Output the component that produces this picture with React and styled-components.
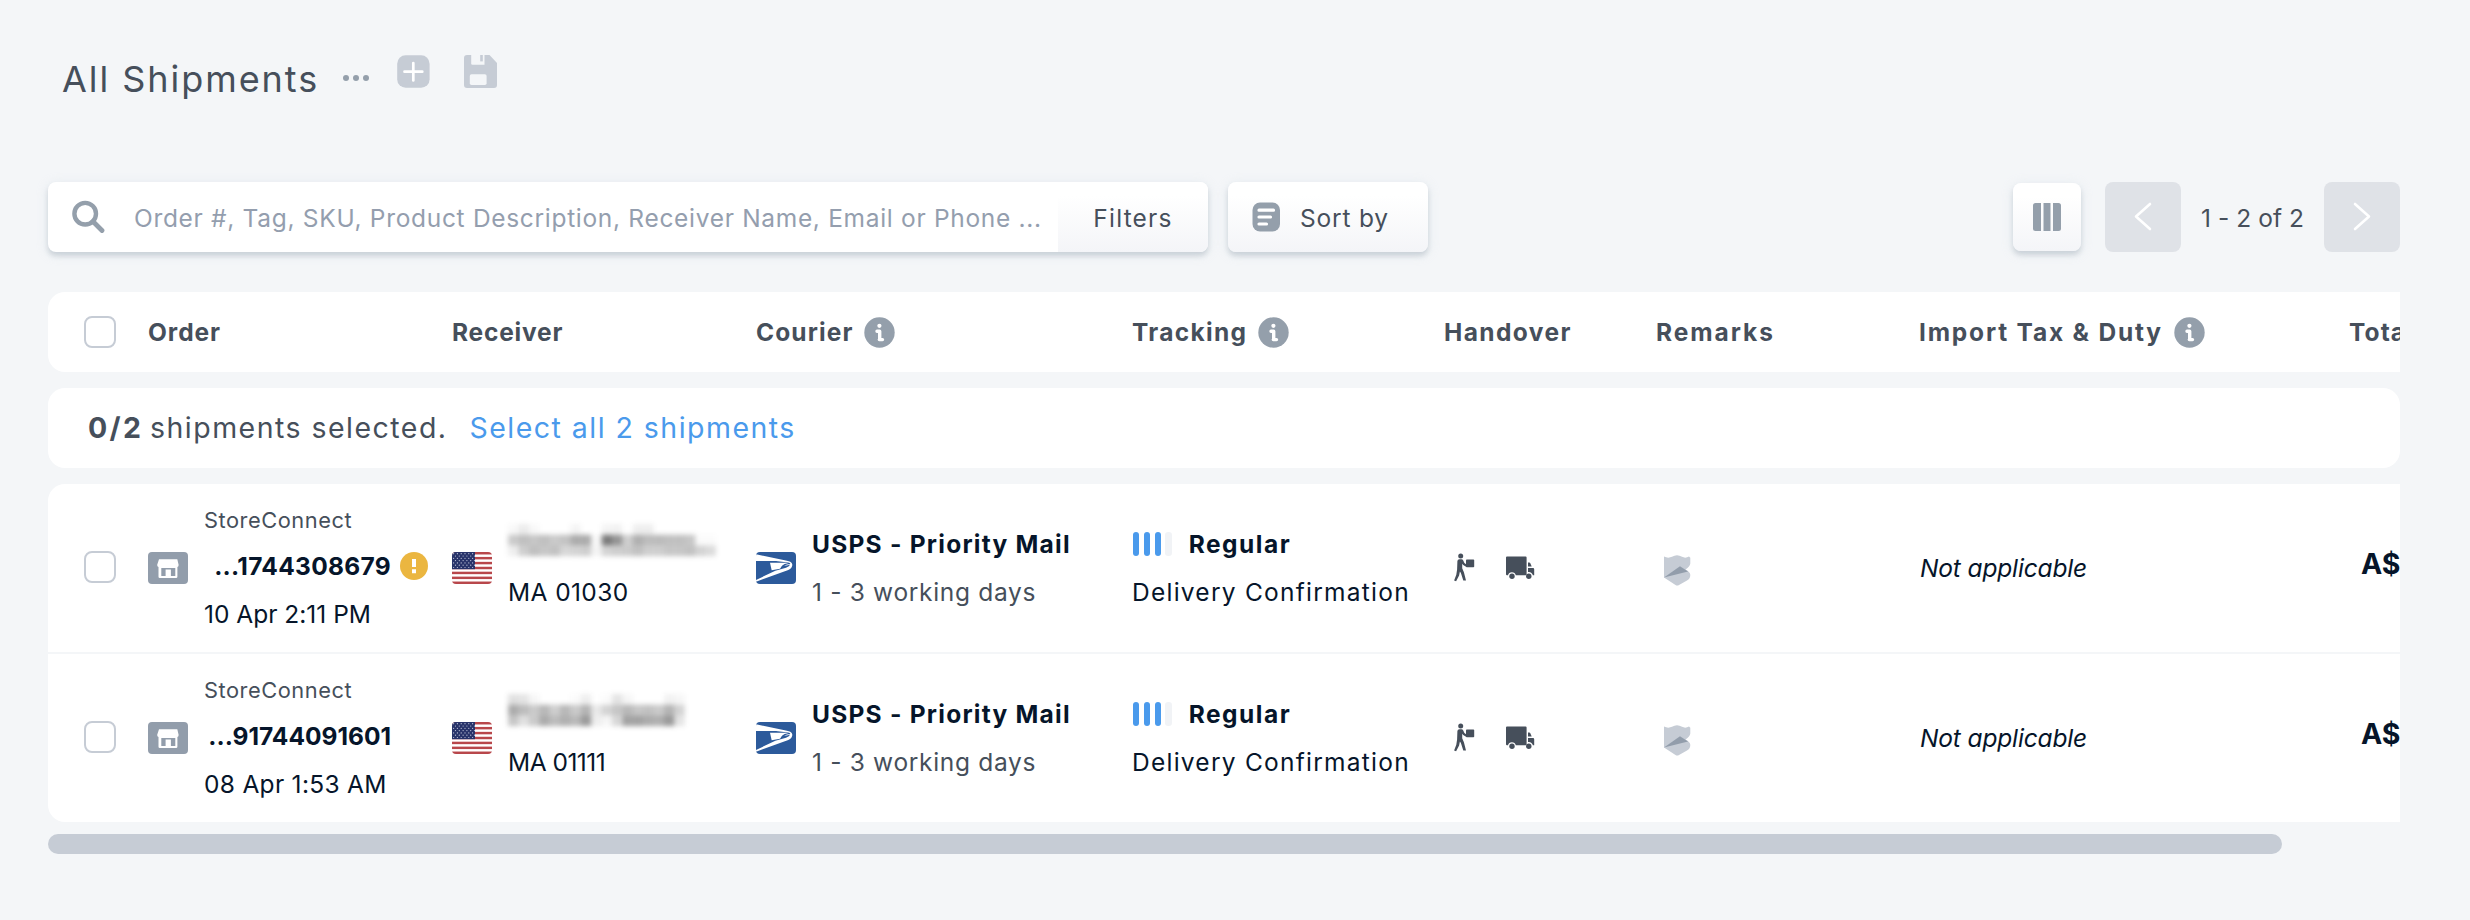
import React from "react";
import styled, { createGlobalStyle, css } from "styled-components";

const c = {
  bg: "#f4f6f8",
  ink: "#06152a",
  slate: "#464f5b",
  grey: "#949fab",
  light: "#c6ccd5",
  pale: "#dfe2e7",
  blue: "#4a9aec",
  amber: "#ebb640",
};

const GlobalStyle = createGlobalStyle`
  *, *::before, *::after { box-sizing: border-box; }
  body {
    margin: 0;
    background: ${c.bg};
    color: ${c.slate};
    font-family: Inter, "Liberation Sans", sans-serif;
    font-size: 24.5px;
    line-height: 48px;
    font-variant-ligatures: none;
  }
  button { font: inherit; color: inherit; border: 0; padding: 0; background: none; }
`;

const Page = styled.main`
  width: 2470px;
  height: 920px;
  padding: 0 70px 0 48px;
  overflow: hidden;
`;

const TitleBar = styled.header`
  display: flex;
  align-items: center;
  height: 156px;
  padding-left: 14px;
`;

const Title = styled.h1`
  margin: 0;
  width: 281px;
  padding-top: 1px;
  font-size: 36px;
  font-weight: 400;
  letter-spacing: 1.95px;
  white-space: nowrap;
`;

const TitleAction = styled.button`
  display: flex;
  margin: 0 34px 13px 0;
`;

const MoreButton = styled.button`
  display: flex;
  gap: 3.4px;
  margin-right: 28px;
`;

const Dot = styled.span`
  width: 6.4px;
  height: 6.4px;
  border-radius: 50%;
  background: ${c.grey};
`;

const Toolbar = styled.div`
  display: flex;
  align-items: center;
  height: 70px;
  margin: 26px 0 40px;
`;

const raised = css`
  border-radius: 8px;
  box-shadow: 0 4px 5px rgba(140, 152, 165, 0.32), 0 2px 12px rgba(190, 205, 220, 0.3);
`;

const softFill = css`
  background: linear-gradient(#ffffff 20%, #f4f5f8);
`;

const SearchBox = styled.div`
  ${raised}
  display: flex;
  align-items: center;
  width: 1160px;
  height: 70px;
  margin-right: 20px;
  padding-left: 23px;
  background: #fff;
`;

const Placeholder = styled.span`
  flex: 1;
  padding: 1px 0 0 29px;
  color: #949eae;
  letter-spacing: 0.69px;
  white-space: nowrap;
`;

const FiltersButton = styled.button`
  ${softFill}
  width: 150px;
  height: 70px;
  padding-top: 1px;
  border-radius: 0 8px 8px 0;
  letter-spacing: 1.2px;
`;

const SortButton = styled.button`
  ${raised}
  ${softFill}
  display: flex;
  align-items: center;
  gap: 19px;
  width: 200px;
  height: 70px;
  padding-left: 24px;
  letter-spacing: 0.8px;
`;

const ColumnsButton = styled.button`
  ${raised}
  ${softFill}
  display: flex;
  align-items: center;
  justify-content: center;
  width: 68px;
  height: 68px;
  margin: 0 24px 0 auto;
`;

const PagerButton = styled.button`
  display: flex;
  align-items: center;
  justify-content: center;
  width: 76px;
  height: 70px;
  border-radius: 8px;
  background: ${c.pale};
`;

const PageRange = styled.span`
  width: 143px;
  padding-top: 1px;
  text-align: center;
  letter-spacing: 0.05px;
`;

const ButtonLabel = styled.span`
  padding-top: 1px;
`;

const Viewport = styled.div`
  width: 2352px;
  overflow: hidden;
`;

const columns = css`
  display: grid;
  grid-template-columns: 64px 304px 304px 376px 312px 212px 263px 430px 240px;
  width: 2540px;
  padding-left: 36px;
`;

const HeadRow = styled.div`
  ${columns}
  align-items: center;
  height: 80px;
  border-radius: 17px;
  background: #fff;
`;

const HeadCell = styled.div`
  display: flex;
  align-items: center;
  gap: 11px;
  font-weight: 700;
  white-space: nowrap;
  letter-spacing: ${(p) => p.$track}px;
`;

const InfoDot = styled.svg`
  width: 31px;
  height: 31px;
`;

const Checkbox = styled.span`
  width: 32px;
  height: 32px;
  border: 2px solid ${c.light};
  border-radius: 8px;
  background: #fff;
`;

const SelectionBar = styled.div`
  display: flex;
  align-items: center;
  height: 80px;
  margin: 16px 0;
  padding-left: 40px;
  border-radius: 17px;
  background: #fff;
  font-size: 28.5px;
  letter-spacing: 1.47px;
  white-space: pre;
`;

const Count = styled.strong`
  width: 62px;
  font-weight: 700;
  letter-spacing: 2.3px;
`;

const SelectAll = styled.a`
  margin-left: 22px;
  color: ${c.blue};
`;

const Body = styled.div`
  width: 2540px;
  border-radius: 17px;
  background: #fff;
  overflow: hidden;
`;

const Row = styled.div`
  ${columns}
  align-items: center;
  height: 168px;
  & + & { height: 170px; border-top: 2px solid ${c.bg}; }
`;

const Cell = styled.div`
  display: flex;
  align-items: center;
  color: ${c.ink};
  white-space: nowrap;
`;

const CheckCell = styled(Cell)`
  padding-bottom: 2px;
`;

const Badge = styled.svg`
  flex: none;
  width: 40px;
  height: 32px;
  margin-right: 16px;
  border-radius: 4px;
`;

const OrderLines = styled.div`
  display: grid;
  grid-template-rows: 47px 45px 52px;
  height: 144px;
  align-items: center;
`;

const Store = styled.span`
  color: ${c.slate};
  font-size: 21.8px;
  letter-spacing: 0.55px;
`;

const OrderNumber = styled.strong`
  display: flex;
  align-items: center;
  justify-content: flex-end;
  width: 187px;
  font-weight: 700;
  letter-spacing: ${(p) => p.$track}px;
`;

const Alert = styled.svg`
  flex: none;
  width: 28px;
  height: 28px;
  margin: 0 -37px 0 9px;
`;

const Line = styled.div`
  display: flex;
  align-items: center;
  height: 48px;
  letter-spacing: ${(p) => p.$track || 0}px;
  color: ${(p) => (p.$muted ? c.slate : c.ink)};
  font-weight: ${(p) => (p.$strong ? 700 : 400)};
`;

const Speed = styled.span`
  display: flex;
  gap: 4.4px;
  margin: 0 17px 0 1px;
`;

const SpeedBar = styled.i`
  width: 6.4px;
  height: 24px;
  border-radius: 3.2px;
  background: ${(p) => (p.$on ? c.blue : "#f1f3f6")};
`;

const Handover = styled(Cell)`
  padding-left: 10px;
  gap: 31px;
`;

const Remark = styled(Cell)`
  padding: 4px 0 0 8px;
`;

const Tax = styled(Cell)`
  padding: 0 0 1px 1px;
  font-style: italic;
  letter-spacing: -0.15px;
`;

const Total = styled(Cell)`
  padding: 0 0 9px 12px;
  font-size: 28.5px;
  font-weight: 700;
`;

const Mosaic = styled.svg`
  display: block;
  width: 220px;
  height: 48px;
  margin-left: -1px;
  filter: blur(2.6px);
`;

const Scrollbar = styled.div`
  width: 2234px;
  height: 20px;
  margin-top: 12px;
  border-radius: 10px;
  background: ${c.light};
`;

const Info = () => (
  <InfoDot viewBox="0 0 31 31">
    <circle cx="15.5" cy="15.5" r="15.2" fill={c.grey} />
    <circle cx="15.4" cy="8.8" r="2.1" fill="#fff" />
    <path d="M13 14.300h2.700v8.200M15.300 22.600h3.200" fill="none" stroke="#fff" strokeWidth="3.400" strokeLinecap="round" strokeLinejoin="round" />
  </InfoDot>
);

const StoreBadge = () => (
  <Badge viewBox="0 0 40 32">
    <rect width="40" height="32" fill="#929dab" />
    <path d="M11 7.2h18.3l1.3 5.6q.2 2-1.2 2.2v9.8q0 1.3-1.3 1.3H11.8q-1.3 0-1.3-1.3V15q-1.5-.2-1.3-2.2Z" fill="#fff" />
    <path d="M13.3 16h14v8h-4.4v-6.600h-5.300V24h-4.300Z" fill="#929dab" />
  </Badge>
);

const stars = [];
for (let r = 0; r < 7; r++) for (let k = 0; k < 6; k++) stars.push([1.6 + k * 3.8 + (r % 2) * 1.9, 1.7 + r * 2.3]);

const Flag = () => (
  <Badge viewBox="0 0 40 32">
    <rect width="40" height="32" fill="#fff" />
    {[0, 1, 2, 3, 4, 5, 6].map((i) => (
      <rect key={i} y={(i * 64) / 13} width="40" height={32 / 13} fill="#b8474b" />
    ))}
    <rect width="23" height="17.2" fill="#28336a" />
    {stars.map(([x, y]) => x < 22.6 && <circle key={`${x}-${y}`} cx={x} cy={y} r="0.62" fill="#c3c8dc" />)}
  </Badge>
);

const Usps = () => (
  <Badge viewBox="0 0 120 96">
    <rect width="120" height="96" fill="#2c5a9b" />
    <path d="M0 7L86 25Q108 28 109 38Q109 48 97 54L0 89V84L58 56L90 47Q101 43 102 38L84 42Q92 36 103 36Q102 32 90 31L60 27H0Z" fill="#fff" />
    <path d="M42 32L90 32Q96 32 96 34Q84 35 78 41L72 50L47 55Z" fill="#fff" />
  </Badge>
);

const CarryIcon = () => (
  <svg width="21" height="30" viewBox="0 0 21 30" fill={c.slate}>
    <circle cx="6.700" cy="3" r="2.500" />
    <rect x="12" y="6.600" width="8.200" height="7.600" rx="0.8" />
    <path d="M5.400 6.200h2.200q1 0 1.500 1l1.300 2.800 2 1.500v2.400l-3.200-1.800-1-1.400v4.600l1.700 4 2.100 8.200h-2.700L6.900 20l-1-1.500-.8 4-3 5.800-2-.8 2.200-5.800.8-5.200.3-8.400q.2-1.900 2-1.900Z" />
  </svg>
);

const TruckIcon = () => (
  <svg width="29" height="24" viewBox="0 0 29 24" fill={c.slate}>
    <path d="M1 .5h18.600q1 0 1 1v17.800h-10.800a4 4 0 0 0-7.800 0H1q-1 0-1-1V1.500q0-1 1-1Z" />
    <path d="M22 6.500h1.300q.6 0 .9.600l1.500 3.300H22Z" />
    <path d="M22 12h5q1.200 0 1.200 1.200v6.100h-1.300a4 4 0 0 0-4.900-3.200Z" />
    <circle cx="6" cy="20.300" r="2.700" />
    <circle cx="22.800" cy="20.300" r="2.700" />
  </svg>
);

const RemarkIcon = () => (
  <svg width="27" height="31" viewBox="0 0 27 31">
    <path d="M0 1.500Q4 3.600 8 1.800Q13-1.200 18 1.800Q21.500 3.600 25 1.500L26.300 2.800V8.500Q26 11.500 21.500 14.500Q26.300 17 26.300 20Q26.300 23.500 23 25.500L15 30Q13.200 31 11.500 30L0 22.500Z" fill={c.light} />
    <path d="M0 22.500L16 11.200L24 16.600Z" fill="#929dab" />
  </svg>
);

const SearchIcon = () => (
  <svg width="34" height="34" viewBox="0 0 34 34" fill="none" stroke={c.grey}>
    <circle cx="14.200" cy="13.700" r="10.800" strokeWidth="4.400" />
    <path d="M22 21.500L31 30.500" strokeWidth="4.800" strokeLinecap="round" />
  </svg>
);

const SortIcon = () => (
  <svg width="29" height="30" viewBox="0 0 29 30">
    <rect x="0.500" y="0.500" width="27.500" height="29" rx="7.500" fill={c.grey} />
    <path d="M7 8.200h14.500M7 15h11.500M7 22h7.500" stroke="#fff" strokeWidth="3.200" strokeLinecap="round" />
  </svg>
);

const ColumnsIcon = () => (
  <svg width="28" height="28" viewBox="0 0 28 28" fill={c.grey}>
    <path d="M2.500 0H8v28H2.500Q0 28 0 25.500v-23Q0 0 2.500 0Z" />
    <rect x="10.500" width="7" height="28" />
    <path d="M20 0h5.500Q28 0 28 2.500v23q0 2.500-2.500 2.500H20Z" />
  </svg>
);

const Chevron = ({ d }) => (
  <svg width="18" height="30" viewBox="0 0 18 30">
    <path d={d} fill="none" stroke="#fff" strokeWidth="2.600" strokeLinecap="round" strokeLinejoin="round" />
  </svg>
);

const PlusIcon = () => (
  <svg width="33" height="33" viewBox="0 0 33 33">
    <rect x="0.200" y="0.200" width="32.400" height="32.600" rx="8.500" fill={c.light} />
    <path d="M16.300 8v17.500M7.500 16.700h17.800" stroke="#fff" strokeWidth="2.700" strokeLinecap="round" />
  </svg>
);

const SaveIcon = () => (
  <svg width="34" height="33" viewBox="0 0 34 33">
    <path d="M3 0H25.500L33 8V30q0 3-3 3H3q-3 0-3-3V3q0-3 3-3Z" fill={c.light} />
    <path d="M7.200 0H20.500V9.700H8.500q-1.300 0-1.300-1.300Z" fill={c.bg} />
    <path d="M16.200 0h2.600v6.400h-2.600Z" fill={c.light} />
    <rect x="5.800" y="19.300" width="16.800" height="10.700" rx="1.700" fill={c.bg} />
  </svg>
);

/* Redacted receiver names: darkness (percent) per mosaic cell, top row first. */
const redactions = [
  [
    [3, 9, 3, 0, 0, 0, 5, 0, 0, 5, 6, 0, 8, 8, 0, 0, 0, 0, 0, 0],
    [24, 29, 26, 29, 24, 27, 38, 38, 3, 60, 48, 22, 36, 30, 31, 29, 29, 26, 2, 2],
    [8, 22, 29, 26, 28, 18, 20, 22, 5, 20, 22, 24, 28, 22, 22, 26, 26, 28, 20, 16],
  ],
  [
    [14, 12, 4, 0, 0, 0, 2, 8, 0, 2, 12, 4, 0, 0, 0, 6, 4],
    [38, 30, 24, 32, 22, 32, 24, 34, 10, 20, 26, 32, 26, 28, 24, 34, 20],
    [26, 14, 24, 38, 30, 36, 32, 46, 8, 4, 18, 42, 42, 38, 36, 46, 12],
  ],
];

const Redacted = ({ cells }) => (
  <Mosaic viewBox="0 0 220 48">
    {cells.map((row, y) =>
      row.map((v, x) => (
        <rect key={`${x}-${y}`} x={1 + x * 10.400} y={4 + y * 10.700} width="10.400" height="10.700" fill="#222" opacity={v / 100} />
      ))
    )}
  </Mosaic>
);

const heads = [
  { label: "Order", track: 0.95 },
  { label: "Receiver", track: 0.8 },
  { label: "Courier", track: 1.1, info: true },
  { label: "Tracking", track: 1.3, info: true },
  { label: "Handover", track: 1.4 },
  { label: "Remarks", track: 1.95 },
  { label: "Import Tax & Duty", track: 1.8, info: true },
  { label: "Total", track: 1.1 },
];

const shipments = [
  { number: "...1744308679", numberTrack: 0.3, alert: true, date: "10 Apr 2:11 PM", dateTrack: 0, zip: "MA 01030", zipTrack: 0.4 },
  { number: "...91744091601", numberTrack: 0, date: "08 Apr 1:53 AM", dateTrack: 0.3, zip: "MA 01111", zipTrack: -0.5 },
];

const ShipmentRow = ({ s, cells }) => (
  <Row>
    <CheckCell><Checkbox /></CheckCell>
    <Cell>
      <StoreBadge />
      <OrderLines>
        <Store>StoreConnect</Store>
        <OrderNumber $track={s.numberTrack}>
          {s.number}
          {s.alert && (
            <Alert viewBox="0 0 28 28">
              <circle cx="14" cy="14" r="14" fill={c.amber} />
              <path d="M12 7h4v8h-4ZM12 17.200h4v4h-4Z" fill="#fff" />
            </Alert>
          )}
        </OrderNumber>
        <Line $track={s.dateTrack}>{s.date}</Line>
      </OrderLines>
    </Cell>
    <Cell>
      <Flag />
      <div>
        <Redacted cells={cells} />
        <Line $track={s.zipTrack}>{s.zip}</Line>
      </div>
    </Cell>
    <Cell>
      <Usps />
      <div>
        <Line $strong $track={1.25}>USPS - Priority Mail</Line>
        <Line $muted $track={0.68}>1 - 3 working days</Line>
      </div>
    </Cell>
    <Cell>
      <div>
        <Line $strong $track={1.5}>
          <Speed>
            {[1, 1, 1, 0].map((on, i) => <SpeedBar key={i} $on={on} />)}
          </Speed>
          Regular
        </Line>
        <Line $track={1.25}>Delivery Confirmation</Line>
      </div>
    </Cell>
    <Handover><CarryIcon /><TruckIcon /></Handover>
    <Remark><RemarkIcon /></Remark>
    <Tax>Not applicable</Tax>
    <Total>A$</Total>
  </Row>
);

export default function App() {
  return (
    <>
      <GlobalStyle />
      <Page>
        <TitleBar>
          <Title>All Shipments</Title>
          <MoreButton><Dot /><Dot /><Dot /></MoreButton>
          <TitleAction><PlusIcon /></TitleAction>
          <TitleAction><SaveIcon /></TitleAction>
        </TitleBar>
        <Toolbar>
          <SearchBox>
            <SearchIcon />
            <Placeholder>Order #, Tag, SKU, Product Description, Receiver Name, Email or Phone ...</Placeholder>
            <FiltersButton>Filters</FiltersButton>
          </SearchBox>
          <SortButton><SortIcon /><ButtonLabel>Sort by</ButtonLabel></SortButton>
          <ColumnsButton><ColumnsIcon /></ColumnsButton>
          <PagerButton><Chevron d="M16 2L2 14.500L16 27" /></PagerButton>
          <PageRange>1 - 2 of 2</PageRange>
          <PagerButton><Chevron d="M2 2L16 14.500L2 27" /></PagerButton>
        </Toolbar>
        <Viewport>
          <HeadRow>
            <Checkbox />
            {heads.map((h) => (
              <HeadCell key={h.label} $track={h.track}>
                {h.label}
                {h.info && <Info />}
              </HeadCell>
            ))}
          </HeadRow>
          <SelectionBar>
            <Count>0/2</Count>
            <span>shipments selected.</span>
            <SelectAll>Select all 2 shipments</SelectAll>
          </SelectionBar>
          <Body>
            {shipments.map((s, i) => <ShipmentRow key={s.number} s={s} cells={redactions[i]} />)}
          </Body>
        </Viewport>
        <Scrollbar />
      </Page>
    </>
  );
}
